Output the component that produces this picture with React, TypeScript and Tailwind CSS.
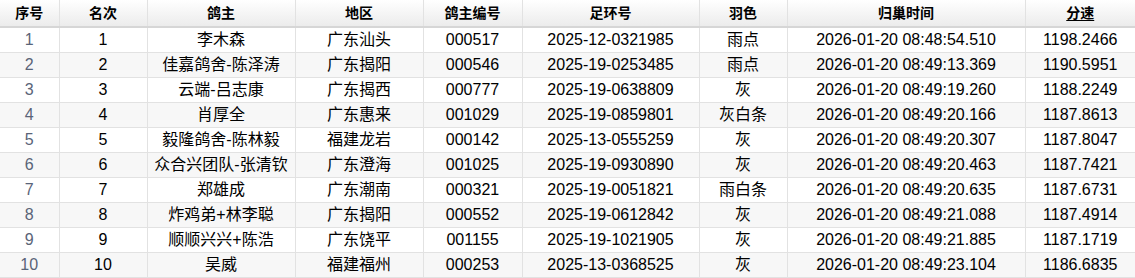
const cols = [
  { key: 'idx', label: '序号', w: 'w-[59px]' },
  { key: 'rank', label: '名次', w: 'w-[88px]' },
  { key: 'owner', label: '鸽主', w: 'w-[148px]' },
  { key: 'area', label: '地区', w: 'w-[128px]' },
  { key: 'no', label: '鸽主编号', w: 'w-[99px]' },
  { key: 'ring', label: '足环号', w: 'w-[177px]' },
  { key: 'color', label: '羽色', w: 'w-[88px]' },
  { key: 'time', label: '归巢时间', w: 'w-[238px]' },
  { key: 'speed', label: '分速', w: 'w-[110px]' },
];

const rows = [
  ['1', '李木森', '广东汕头', '000517', '2025-12-0321985', '雨点', '2026-01-20 08:48:54.510', '1198.2466'],
  ['2', '佳嘉鸽舍-陈泽涛', '广东揭阳', '000546', '2025-19-0253485', '雨点', '2026-01-20 08:49:13.369', '1190.5951'],
  ['3', '云端-吕志康', '广东揭西', '000777', '2025-19-0638809', '灰', '2026-01-20 08:49:19.260', '1188.2249'],
  ['4', '肖厚全', '广东惠来', '001029', '2025-19-0859801', '灰白条', '2026-01-20 08:49:20.166', '1187.8613'],
  ['5', '毅隆鸽舍-陈林毅', '福建龙岩', '000142', '2025-13-0555259', '灰', '2026-01-20 08:49:20.307', '1187.8047'],
  ['6', '众合兴团队-张清钦', '广东澄海', '001025', '2025-19-0930890', '灰', '2026-01-20 08:49:20.463', '1187.7421'],
  ['7', '郑雄成', '广东潮南', '000321', '2025-19-0051821', '雨白条', '2026-01-20 08:49:20.635', '1187.6731'],
  ['8', '炸鸡弟+林李聪', '广东揭阳', '000552', '2025-19-0612842', '灰', '2026-01-20 08:49:21.088', '1187.4914'],
  ['9', '顺顺兴兴+陈浩', '广东饶平', '001155', '2025-19-1021905', '灰', '2026-01-20 08:49:21.885', '1187.1719'],
  ['10', '吴威', '福建福州', '000253', '2025-13-0368525', '灰', '2026-01-20 08:49:23.104', '1186.6835'],
];

export default function App() {
  return (
    <div className="w-[1135px] h-[278px] bg-white overflow-hidden font-['Liberation_Sans','Noto_Sans_CJK_SC',sans-serif]">
      <table className="w-[1135px] table-fixed border-collapse">
        <thead>
          <tr className="h-[27px] bg-gradient-to-b from-white to-[#ebebeb]">
            {cols.map((c, i) => (
              <th
                key={c.key}
                className={`${c.w} p-0 text-[14px] font-bold text-black text-center border-b-2 border-b-[#d6d6d6] ${i < cols.length - 1 ? 'border-r border-r-[#e2e2e2]' : ''}`}
              >
                <span className={c.key === 'speed' ? 'underline underline-offset-2' : ''}>{c.label}</span>
              </th>
            ))}
          </tr>
        </thead>
        <tbody>
          {rows.map((r, ri) => (
            <tr key={ri} className={`h-[25px] ${ri % 2 === 1 ? 'bg-[#f7f7f7]' : 'bg-white'}`}>
              <td className="p-0 text-center text-[16px] leading-[20px] text-[#5a6478] border-b border-r border-[#e2e2e2]">{ri + 1}</td>
              {r.map((v, ci) => (
                <td
                  key={ci}
                  className={`p-0 text-center text-[16px] leading-[20px] text-black border-b border-[#e2e2e2] ${ci < r.length - 1 ? 'border-r' : ''} whitespace-nowrap`}
                >
                  {v}
                </td>
              ))}
            </tr>
          ))}
        </tbody>
      </table>
    </div>
  );
}
